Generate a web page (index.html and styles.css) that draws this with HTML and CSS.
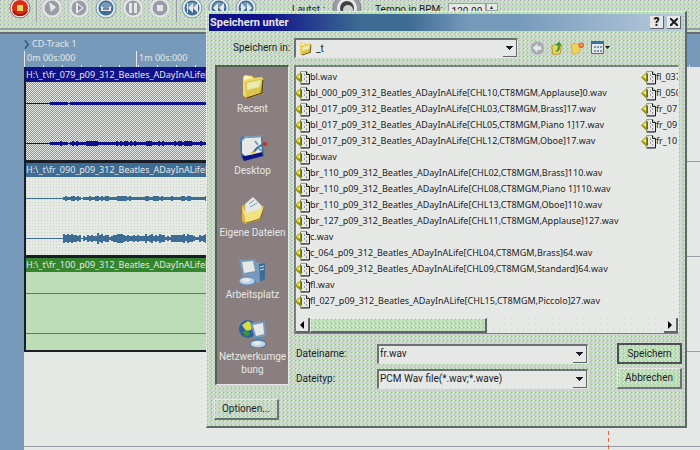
FILE: index.html
```
<!DOCTYPE html>
<html lang="de">
<head>
<meta charset="utf-8">
<title>Speichern unter</title>
<link rel="stylesheet" href="styles.css">
</head>
<body>
<svg class="defs" aria-hidden="true">
  <symbol id="disc" viewBox="0 0 22 22"><circle cx="11" cy="11" r="10" fill="#e6e8e5" stroke="#c9cbd0"/><circle cx="11" cy="11" r="7.5" fill="#9a9ca8"/></symbol>
  <symbol id="disc-blue" viewBox="0 0 22 22"><circle cx="11" cy="11" r="10" fill="#e6e8e5" stroke="#779abb"/><circle cx="11" cy="11" r="7.5" fill="#3d6c94"/><path d="M5 11a6 6 0 0 1 12 0z" fill="#779abb"/></symbol>
  <symbol id="wav" viewBox="0 0 16 15">
    <path d="M5.500 1.500h6l3 3v9h-9z" fill="#e6e8e5" stroke="#9a9ca8"/>
    <path d="M11.500 1.500v3h3v9.500h-9" fill="none" stroke="#191d28"/>
    <path d="M9.500 4v2m0 2v2m2-4v2m0 2v2" stroke="#9a9ca8"/>
    <path d="M0 7.500L6 2v11z" fill="#8f8f20"/><path d="M1.500 7L5 4v5z" fill="#f0ec38"/>
    <path d="M6.500 3.500v8" stroke="#5a5c58"/>
  </symbol>
  <symbol id="folder" viewBox="0 0 28 28">
    <path d="M4 5l2-2 7 1 2 2 9-1 1 2-1 15-16 5-4-3z" fill="#b8932c"/>
    <path d="M4 5l2-2 7 1 2 2 8-1v4l-3 13-14 3-2-2z" fill="#f2d965"/>
    <path d="M6 10l18-4-3 15-14 4z" fill="#dcc64c"/><path d="M8 11l14-3-2 7-12 3z" fill="#e7ecb4"/>
    <path d="M5 5l2-1 6 1 1 1-9 2z" fill="#fbf4bb"/><path d="M8 26l15-5 1-13" fill="none" stroke="#443b22"/>
  </symbol>
</svg>

<header class="toolbar">
  <button class="round" aria-label="Aufnahme"><svg viewBox="0 0 22 22"><circle cx="11" cy="11" r="10" fill="#e6e8e5" stroke="#a66"/><circle cx="11" cy="11" r="8" fill="#dd2a14"/><path d="M4 14a8 8 0 0 0 14 0" fill="none" stroke="#a51510" stroke-width="2"/><path d="M8 8h6v6H8z" fill="#e8d462"/></svg></button>
  <span class="divider"></span>
  <button class="round" aria-label="Vor"><svg viewBox="0 0 22 22"><use href="#disc"/><path d="M8 5l7 5-5 5z" fill="#e6e8e5"/></svg></button>
  <button class="round" aria-label="Wiedergabe"><svg viewBox="0 0 22 22"><use href="#disc"/><path d="M8 5l8 6-8 6z" fill="#e6e8e5"/><path d="M10 8l4 3-4 3z" fill="#8a8c98"/></svg></button>
  <button class="round" aria-label="Schleife"><svg viewBox="0 0 22 22"><use href="#disc-blue"/><path d="M6 9v5h10V9l-3 2H9z" fill="#e6e8e5"/><path d="M8 12h6" stroke="#10128a"/></svg></button>
  <button class="round" aria-label="Pause"><svg viewBox="0 0 22 22"><use href="#disc"/><path d="M7 6h3v10H7zM12 6h3v10h-3z" fill="#e6e8e5"/></svg></button>
  <button class="round" aria-label="Stopp"><svg viewBox="0 0 22 22"><use href="#disc"/><path d="M8 8h6v6H8z" fill="#e6e8e5"/></svg></button>
  <span class="divider"></span>
  <button class="round" aria-label="Anfang"><svg viewBox="0 0 22 22"><use href="#disc-blue"/><path d="M6 6h1v10H6zM12 6v10l-5-5zM17 6v10l-5-5z" fill="#e6e8e5"/></svg></button>
  <button class="round" aria-label="Zurück"><svg viewBox="0 0 22 22"><use href="#disc-blue"/><path d="M10 6v10l-5-5zM16 6v10l-5-5z" fill="#e6e8e5"/></svg></button>
  <button class="round" aria-label="Vorwärts"><svg viewBox="0 0 22 22"><use href="#disc-blue"/><path d="M6 6v10l5-5zM12 6v10l5-5z" fill="#e6e8e5"/></svg></button>
  <span class="volume">Lautst.:</span>
  <svg class="knob" viewBox="0 0 30 30"><circle cx="15" cy="15" r="14" fill="#9a9ca8" stroke="#8a8080"/><circle cx="15" cy="15" r="10" fill="#e6e8e5"/><circle cx="15" cy="15" r="7" fill="#443f44"/><circle cx="16" cy="17" r="5" fill="#cdd3cb"/></svg>
  <label class="tempo" for="bpm">Tempo in BPM:</label>
  <input id="bpm" class="bpm" value="120.00">
  <button class="spin" aria-label="Schneller">▲</button>
</header>

<main class="editor">
  <div class="gutter"></div>
  <div class="stage">
    <div class="ruler">
      <div class="marker"><svg viewBox="0 0 6 10"><path d="M1 0l4 5-4 5" fill="none" stroke="#2e5c8a" stroke-width="2"/></svg>CD-Track 1</div>
      <div class="times"><span>0m 00s:000</span><span>1m 00s:000</span></div>
    </div>
    <section class="lane"><div class="clip navy"><h2>H:\_t\fr_079_p09_312_Beatles_ADayInALife[CHL03]</h2><svg class="wave" data-lines="21,24,1;61,24,2" viewBox="0 0 182 79"></svg></div></section>
    <section class="lane"><div class="clip teal"><h2>H:\_t\fr_090_p09_312_Beatles_ADayInALife[CHL05]</h2><svg class="wave" data-lines="21,37,2;61,37,4" viewBox="0 0 182 79"></svg></div></section>
    <section class="lane"><div class="clip green"><h2>H:\_t\fr_100_p09_312_Beatles_ADayInALife[CHL12]</h2><svg class="wave" data-lines="21,182,1;61,182,1" viewBox="0 0 182 79"></svg></div></section>
    <section class="lane free"></section>
    <div class="cursor"></div>
  </div>
</main>

<section class="dialog" role="dialog" aria-labelledby="title">
  <div class="titlebar"><h1 id="title">Speichern unter</h1><button class="cap" aria-label="Hilfe">?</button><button class="cap" aria-label="Schließen"><svg viewBox="0 0 8 8"><path d="M0 0l8 8M8 0L0 8" stroke="#191d28" stroke-width="2"/></svg></button></div>
  <div class="where">
    <label for="dir">Speichern in:</label>
    <div class="combo dir"><svg class="mini"><use href="#folder"/></svg><select id="dir"><option>_t</option></select></div>
    <div class="tools">
      <button aria-label="Zurück"><svg viewBox="0 0 16 16"><circle cx="8" cy="8" r="7" fill="#a9abb4"/><path d="M8 3L3 8l5 5v-3h4V6H8z" fill="#e6e8e5"/></svg></button>
      <button aria-label="Aufwärts"><svg viewBox="0 0 16 16"><path d="M2 6l4-2 6 2-1 8-8 1z" fill="#ecd25c" stroke="#b8932c"/><path d="M7 12c4-1 4-4 3-7l3 1-3-5-5 4 3 0c1 3 0 5-2 6z" fill="#3a9633"/></svg></button>
      <button aria-label="Neuer Ordner"><svg viewBox="0 0 16 16"><path d="M1 4l4-1 7 2-2 8-7 2z" fill="#ecd25c" stroke="#d9b244"/><circle cx="12" cy="5" r="3" fill="#dd6a3c"/><circle cx="12" cy="5" r="1" fill="#f2d965"/></svg></button>
      <button aria-label="Ansicht"><svg class="wide" viewBox="0 0 20 16"><path d="M1.500 2.500h12v11h-12z" fill="#e6e8e5" stroke="#3d6c94"/><path d="M1 1h13v3H1z" fill="#3d6cb4"/><path d="M4 6h2v2H4zM7 6h2v2H7zM10 6h2v2h-2zM4 10h2v2H4zM7 10h2v2H7zM10 10h2v2h-2z" fill="#779abb"/><path d="M15 6h5l-2.500 3z" fill="#191d28"/></svg></button>
    </div>
  </div>
  <div class="content">
    <nav class="places">
      <a href="#recent"><svg><use href="#folder"/></svg>Recent</a>
      <a href="#desktop"><svg viewBox="0 0 28 28"><path d="M1 5l3-3 19-1 2 21-19 5-4-3z" fill="#3d6c94"/><path d="M3 22l20-4 1 4-19 5z" fill="#10128a"/><path d="M3 6l3-2 16-1 1 15-17 4-3-3z" fill="#e6e8e5"/><path d="M2 7l4-4 17-1" fill="none" stroke="#779abb" stroke-width="2"/><path d="M26 9l-8 5-5 6" fill="none" stroke="#3d6c94" stroke-width="2"/><path d="M16 7l3 4m0 3l4 3" stroke="#779abb" stroke-width="2"/><path d="M12 20l4-2" stroke="#e3cf48" stroke-width="2"/><circle cx="26" cy="10" r="2" fill="#dd2a14"/></svg>Desktop</a>
      <a href="#files"><svg viewBox="0 0 28 28"><path d="M3 9l12 1 10 0-4 14-15 4-3-3z" fill="#d9b244"/><path d="M6 8l8-7 9 9-2 9-14 2z" fill="#e6e8e5"/><path d="M10 8l5-4M11 11l7-4" stroke="#779abb"/><path d="M3 11l5 6 17-5-5 11-13 4z" fill="#f2e280"/><path d="M7 27l14-4 4-11" fill="none" stroke="#8a6b20"/></svg>Eigene Dateien</a>
      <a href="#computer"><svg viewBox="0 0 28 28"><path d="M15 4l11 1v16l-7 4-6-5z" fill="#779abb"/><path d="M20 6l6-1v16l-5 3z" fill="#3d6c94"/><path d="M0 2l16-1 3 14-15 4z" fill="#779abb"/><path d="M3 4l11-1 2 10-11 2z" fill="#e6e8e5"/><path d="M21 9l4-1M21 12l4-1" stroke="#cfe0f0"/><path d="M8 17h6v4H8z" fill="#779abb"/><ellipse cx="8" cy="23" rx="8" ry="4" fill="#b9d3ea" stroke="#5c8cb8"/><ellipse cx="7" cy="22" rx="4" ry="2" fill="#e6e8e5"/></svg>Arbeitsplatz</a>
      <a href="#network"><svg viewBox="0 0 28 28"><circle cx="9" cy="9" r="9" fill="#2c5fa0"/><path d="M3 5l6-4 5 3-2 6-5 1z" fill="#d9dc3c"/><path d="M3 12l5-2 3 4-3 3z" fill="#3a9633"/><path d="M11 3l15-2 1 15-11 3z" fill="#779abb"/><path d="M14 5l10-2 1 11-8 2z" fill="#e6e8e5"/><path d="M16 17h6v5h-6z" fill="#5c8cb8"/><ellipse cx="19" cy="24" rx="8" ry="4" fill="#b9d3ea" stroke="#3d6c94"/><ellipse cx="18" cy="23" rx="4" ry="2" fill="#e6e8e5"/></svg>Netzwerkumge<br>bung</a>
    </nav>
    <div class="panel">
      <div class="listbox">
        <ul class="files">
          <li>bl.wav</li><li>bl_000_p09_312_Beatles_ADayInALife[CHL10,CT8MGM,Applause]0.wav</li><li>bl_017_p09_312_Beatles_ADayInALife[CHL03,CT8MGM,Brass]17.wav</li><li>bl_017_p09_312_Beatles_ADayInALife[CHL05,CT8MGM,Piano 1]17.wav</li><li>bl_017_p09_312_Beatles_ADayInALife[CHL12,CT8MGM,Oboe]17.wav</li><li>br.wav</li><li>br_110_p09_312_Beatles_ADayInALife[CHL02,CT8MGM,Brass]110.wav</li><li>br_110_p09_312_Beatles_ADayInALife[CHL08,CT8MGM,Piano 1]110.wav</li><li>br_110_p09_312_Beatles_ADayInALife[CHL13,CT8MGM,Oboe]110.wav</li><li>br_127_p09_312_Beatles_ADayInALife[CHL11,CT8MGM,Applause]127.wav</li><li>c.wav</li><li>c_064_p09_312_Beatles_ADayInALife[CHL04,CT8MGM,Brass]64.wav</li><li>c_064_p09_312_Beatles_ADayInALife[CHL09,CT8MGM,Standard]64.wav</li><li>fl.wav</li><li>fl_027_p09_312_Beatles_ADayInALife[CHL15,CT8MGM,Piccolo]27.wav</li>
          <li>fl_037</li><li>fl_050</li><li>fr_07</li><li>fr_09</li><li>fr_10</li>
        </ul>
        <div class="scroll"><button aria-label="Links"><svg viewBox="0 0 4 8"><path d="M4 0v8L0 4z"/></svg></button><span class="thumb"></span><span class="track"></span><button aria-label="Rechts"><svg viewBox="0 0 4 8"><path d="M0 0v8l4-4z"/></svg></button></div>
      </div>
      <form class="fields">
        <label for="name">Dateiname:</label>
        <div class="combo"><input id="name" value="fr.wav"></div>
        <button class="push default" type="button">Speichern</button>
        <label for="type">Dateityp:</label>
        <div class="combo"><select id="type"><option>PCM Wav file(*.wav;*.wave)</option></select></div>
        <button class="push" type="button">Abbrechen</button>
      </form>
    </div>
  </div>
  <button class="push options" type="button">Optionen...</button>
</section>
<script src="app.js"></script>
</body>
</html>
```
FILE: styles.css
```
:root {
  --green: #bdddb8;
  --white: #e6e8e5;
  --gray: #9a9ca8;
  --blue: #779abb;
  --ink: #191d28;
  --dither:
    conic-gradient(from 0deg at 1px 1px, transparent 75%, #adb0b6 0) 0 0 / 4px 4px,
    conic-gradient(from 0deg at 1px 1px, transparent 75%, var(--white) 0) 2px 0 / 4px 4px,
    conic-gradient(from 0deg at 1px 1px, transparent 75%, var(--white) 0) 1px 2px / 4px 4px,
    conic-gradient(from 0deg at 1px 1px, transparent 75%, #c6c8ca 0) 3px 2px / 4px 4px,
    var(--green);
}
* { box-sizing: border-box; }
body {
  margin: 0;
  min-height: 100vh;
  display: flex;
  flex-direction: column;
  overflow: hidden;
  background: var(--white);
  color: var(--ink);
  font: 10px/14px Roboto, "Liberation Sans", sans-serif;
}
h1, h2, ul { margin: 0; padding: 0; font: inherit; }
button, input, select { font: inherit; color: inherit; border: 0; border-radius: 0; padding: 0; margin: 0; background: none; }
svg { display: block; }
.defs { position: absolute; width: 0; height: 0; }

/* Toolbar */
.toolbar {
  display: flex;
  align-items: flex-start;
  gap: 5px;
  height: 34px;
  padding-left: 9px;
  background: linear-gradient(var(--gray), var(--gray)) 0 28px / 100% 2px no-repeat, var(--dither);
  border-bottom: 2px solid #6a6c74;
}
.round { flex: none; margin-top: -3px; }
.round svg { width: 22px; height: 22px; }
.divider { width: 1px; height: 22px; margin-right: -1px; background: var(--gray); }
.volume { margin: 3px 2px 0 30px; }
.knob { flex: none; width: 30px; height: 30px; margin: -7px 8px 0 0; }
.tempo { margin-top: 3px; }
.bpm { width: 38px; height: 16px; margin-top: 3px; padding-left: 3px; background: var(--white); border: 1px solid var(--gray); }
.spin { width: 12px; height: 8px; margin: 3px 0 0 -5px; font-size: 5px; line-height: 6px; background: var(--white); border: 1px solid var(--gray); }

/* Track editor */
.editor { flex: 1; display: flex; }
.gutter { width: 24px; background: var(--blue); }
.stage { flex: 1; min-width: 0; position: relative; }
.ruler { height: 33px; padding-top: 3px; background: var(--blue); color: var(--white); font: 9px/14px "Noto Sans", sans-serif; }
.marker { display: flex; align-items: center; gap: 3px; }
.marker svg { width: 5px; height: 9px; }
.times { display: flex; height: 16px; background: repeating-linear-gradient(90deg, var(--white) 0 1px, transparent 1px 19px) 0 100% / 100% 2px no-repeat; }
.times span { width: 112px; padding-left: 2px; border-left: 1px solid var(--white); }
.lane { height: 95px; border-bottom: 1px solid var(--gray); }
.cursor { position: absolute; left: 584px; top: 390px; bottom: 0; width: 1px; background: repeating-linear-gradient(#dd6a3c 0 4px, transparent 4px 7px); }
.clip { width: 33%; height: 95px; border: solid var(--ink); border-width: 1px 0 2px 2px; overflow: hidden; }
.clip h2 { height: 14px; overflow: hidden; white-space: nowrap; color: var(--white); font: 9px/14px "Noto Sans", sans-serif; }
.wave { width: 182px; height: 79px; }
.navy { color: #10128a; background: conic-gradient(var(--blue) 25%, var(--white) 0 50%, var(--blue) 0 75%, var(--white) 0) 0 0 / 2px 2px; }
.navy h2 { background: #10128a; }
.teal { color: #3d6c94; background: conic-gradient(from 0deg at 1px 1px, transparent 75%, var(--green) 0) 0 0 / 3px 3px, var(--white); }
.teal h2 { background: conic-gradient(#3d6c94 25%, #3a7a5a 0 50%, #3d6c94 0 75%, #3a7a5a 0) 0 0 / 2px 2px; }
.green { color: #3a9633; background: var(--green); }
.green h2 { background: #35852f; }

/* Save dialog */
.dialog {
  position: absolute;
  left: 206px;
  top: 11px;
  width: 481px;
  padding: 2px;
  background: var(--dither);
  border: solid;
  border-width: 1px 2px 2px 1px;
  border-color: var(--white) #63656c #63656c var(--white);
}
.titlebar { display: flex; align-items: center; gap: 3px; height: 17px; padding: 0 2px 0 1px; background: linear-gradient(90deg, #10128a 12%, #3d6c94 32%, #3d6c94 42%, var(--blue) 55%, var(--blue) 65%, #b8cbdc 100%); }
.titlebar h1 { flex: 1; color: var(--white); font-size: 11px; font-weight: 700; }
.cap { display: grid; place-items: center; width: 14px; height: 13px; font-size: 12px; font-weight: 900; line-height: 10px; background: var(--white); border: solid; border-width: 0 1px 1px 0; border-color: #63656c; }
.cap svg { width: 8px; height: 8px; }
.where { display: flex; align-items: center; height: 34px; padding-left: 24px; }
.where label { width: 61px; }
.combo { position: relative; display: flex; align-items: center; height: 20px; background: var(--white); border: solid; border-width: 2px 1px 1px 2px; border-color: #6d7076 var(--white) var(--white) #6d7076; }
.combo select, .combo input { flex: 1; min-width: 0; align-self: stretch; width: 100%; padding-left: 1px; appearance: none; outline: 0; }
.combo::after {
  content: "";
  position: absolute;
  right: 0; top: 0; bottom: 0;
  width: 13px;
  background: linear-gradient(var(--ink), var(--ink)) 3px 6px / 7px 1px no-repeat, linear-gradient(var(--ink), var(--ink)) 4px 7px / 5px 1px no-repeat, linear-gradient(var(--ink), var(--ink)) 5px 8px / 3px 1px no-repeat, linear-gradient(var(--ink), var(--ink)) 6px 9px / 1px 1px no-repeat, var(--white);
  border: solid #63656c;
  border-width: 0 1px 1px 0;
  pointer-events: none;
}
.dir { width: 224px; padding-left: 2px; }
.mini { width: 15px; height: 15px; margin-right: 2px; }
.tools { display: flex; gap: 5px; margin-left: 12px; }
.tools svg { width: 15px; height: 16px; }
.tools .wide { width: 20px; }

.content { display: flex; align-items: flex-start; gap: 5px; padding: 0 4px 0 6px; }
.places { width: 74px; display: flex; flex-direction: column; gap: 19px; padding: 5px 0 8px; background: #897f80; border: solid; border-width: 2px 1px 1px 2px; border-color: #555f55 var(--white) var(--white) #555f55; }
.places a { display: flex; flex-direction: column; align-items: center; gap: 2px; color: var(--white); text-align: center; text-decoration: none; line-height: 13px; }
.places svg { width: 28px; height: 28px; }
.panel { flex: 1; min-width: 0; }
.listbox { display: flex; flex-direction: column; background: var(--white); border: solid; border-width: 2px 1px 1px 2px; border-color: #7d7f88 var(--white) #7d7f88 #7d7f88; }
.files { display: grid; grid-auto-flow: column; grid-template-rows: repeat(15, 16px); grid-template-columns: 346px 60px; padding-top: 2px; height: 251px; overflow: hidden; list-style: none; font: 9px/16px "Noto Sans", sans-serif; }
.files li { display: flex; align-items: center; white-space: nowrap; }
.files svg { flex: none; width: 16px; height: 15px; margin: 0 -1px 0 -1px; }
.scroll { display: flex; height: 15px; }
.scroll button { display: grid; place-items: center; width: 14px; background: var(--white); border: solid #63656c; border-width: 0 2px 2px 0; }
.scroll svg { width: 4px; height: 8px; }
.thumb { width: 177px; background: var(--dither); border: solid; border-width: 1px 2px 2px 1px; border-color: var(--white) #63656c #63656c var(--white); }
.track { flex: 1; background: conic-gradient(from 0deg at 1px 1px, transparent 75%, var(--green) 0) 0 0 / 6px 6px, var(--white); }
.fields { display: grid; grid-template-columns: 82px 211px 29px 65px; row-gap: 4px; align-items: center; padding: 9px 0 0 1px; }
.fields label { padding-left: 1px; }
.push { height: 21px; background: var(--dither); border: solid; border-width: 1px 2px 2px 1px; border-color: var(--white) #6d7076 #6d7076 var(--white); }
.fields .push { grid-column: 4; }
.default { border: 2px solid #4d5157; }
.options { display: block; width: 65px; margin: 10px 0 4px 5px; }
```
FILE: app.js
```
// File icons in front of every list entry
document.querySelectorAll('.files li').forEach(li => {
  li.insertAdjacentHTML('afterbegin', '<svg><use href="#wav"/></svg>');
});

// Waveforms: "centre line, first sample with signal, amplitude" per channel
document.querySelectorAll('.wave').forEach(svg => {
  let seed = 7;
  const rnd = () => (seed = (seed * 16807) % 2147483647) / 2147483647;
  for (const line of svg.dataset.lines.split(';')) {
    const [y, start, amp] = line.split(',').map(Number);
    let d = `M0 ${y}h182v1H0z`;
    for (let x = start; x < 182; x += 2) {
      if (x > start + 16 && x < start + 20) continue;
      const swell = 0.5 + 0.5 * Math.abs(Math.sin(x / 9));
      const h = Math.max(1, Math.round(amp * swell * (0.5 + rnd() * 0.7)));
      d += `M${x} ${y - h}h2v${2 * h + 1}h-2z`;
    }
    svg.insertAdjacentHTML('beforeend', `<path d="${d}" fill="currentColor"/>`);
  }
});
```
